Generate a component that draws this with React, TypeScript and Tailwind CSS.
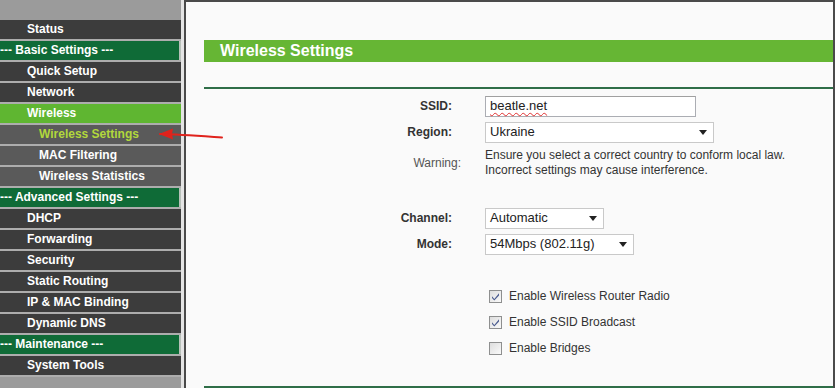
import React from "react";

type MenuItem = { label: string; kind: "top" | "head" | "active" | "sub" | "current" };

const menu: MenuItem[] = [
  { label: "Status", kind: "top" },
  { label: "--- Basic Settings ---", kind: "head" },
  { label: "Quick Setup", kind: "top" },
  { label: "Network", kind: "top" },
  { label: "Wireless", kind: "active" },
  { label: "Wireless Settings", kind: "current" },
  { label: "MAC Filtering", kind: "sub" },
  { label: "Wireless Statistics", kind: "sub" },
  { label: "--- Advanced Settings ---", kind: "head" },
  { label: "DHCP", kind: "top" },
  { label: "Forwarding", kind: "top" },
  { label: "Security", kind: "top" },
  { label: "Static Routing", kind: "top" },
  { label: "IP & MAC Binding", kind: "top" },
  { label: "Dynamic DNS", kind: "top" },
  { label: "--- Maintenance ---", kind: "head" },
  { label: "System Tools", kind: "top" },
];

function MenuRow({ item }: { item: MenuItem }) {
  if (item.kind === "head") {
    return (
      <div className="h-[19px] bg-[#0f6b37] border-r-2 border-[#b7c0b9] text-white text-[12px] font-bold leading-[19px] whitespace-nowrap">
        {item.label}
      </div>
    );
  }
  if (item.kind === "active") {
    return (
      <div className="h-[19px] bg-[#5fb631] text-white text-[12px] font-bold leading-[19px] pl-[27px]">
        {item.label}
      </div>
    );
  }
  if (item.kind === "current") {
    return (
      <div className="h-[19px] bg-[#5a5a5a] text-[#b2d83c] text-[12px] font-bold leading-[19px] pl-[39px]">
        {item.label}
      </div>
    );
  }
  if (item.kind === "sub") {
    return (
      <div className="h-[19px] bg-[#5a5a5a] text-white text-[12px] font-bold leading-[19px] pl-[39px]">
        {item.label}
      </div>
    );
  }
  return (
    <div className="h-[19px] bg-[#3c3c3c] text-white text-[12px] font-bold leading-[19px] pl-[27px]">
      {item.label}
    </div>
  );
}

function Caret() {
  return (
    <svg width="8" height="5" viewBox="0 0 8 5" className="shrink-0">
      <path d="M0 0 L8 0 L4 5 Z" fill="#222" />
    </svg>
  );
}

function Select({ value, width }: { value: string; width: string }) {
  return (
    <div
      className={`${width} h-[21px] flex items-center justify-between border border-[#c9c9c9] bg-white pl-[4px] pr-[6px] text-[13px] text-[#222]`}
    >
      <span>{value}</span>
      <Caret />
    </div>
  );
}

function Check({ on }: { on: boolean }) {
  return (
    <svg width="13" height="13" viewBox="0 0 13 13" className="shrink-0">
      <defs>
        <linearGradient id="cbg" x1="0" y1="0" x2="1" y2="1">
          <stop offset="0" stopColor="#dcdcdc" />
          <stop offset="1" stopColor="#fbfbfb" />
        </linearGradient>
      </defs>
      <rect x="0.5" y="0.5" width="12" height="12" fill="url(#cbg)" stroke="#8e8f8f" />
      {on && <path d="M3 6.2 L5.3 9 L10 3.3 L10 5.4 L5.3 10.6 L3 8 Z" fill="#4a5b8f" />}
    </svg>
  );
}

function Label({ children }: { children: React.ReactNode }) {
  return <div className="text-right text-[12px] font-bold text-[#333] pr-[9px]">{children}</div>;
}

export default function App() {
  return (
    <div className="relative w-[835px] h-[388px] overflow-hidden flex bg-white font-['Liberation_Sans',Arial,sans-serif]">
      <div className="w-[181px] shrink-0 bg-[#9b9b9b] flex flex-col">
        <div className="h-[20px]" />
        {menu.map((m) => (
          <div key={m.label} className="border-b-2 border-[#adadad]">
            <MenuRow item={m} />
          </div>
        ))}
      </div>
      <div className="w-[3px] shrink-0 bg-[#e4e4e4]" />
      <div className="flex-1 bg-[#fafafa] border-l-2 border-t-2 border-r-2 border-[#4a4a4a] pl-[18px]">
        <div className="mt-[38px] h-[22px] bg-[#66b634] text-white text-[16px] font-bold leading-[22px] pl-[16px]">
          Wireless Settings
        </div>
        <div className="mt-[25px] h-[2px] bg-[#2f6e48]" />
        <div className="mt-[4px] grid grid-cols-[257px_1fr] gap-x-[24px]">
          <div className="h-[26px] flex items-center justify-end">
            <Label>SSID:</Label>
          </div>
          <div className="h-[26px] flex items-center">
            <div className="w-[211px] h-[21px] border border-[#abadb3] border-t-[#a0a0a0] bg-white pl-[4px] flex items-center text-[13px] text-[#222]">
              <span className="underline decoration-wavy decoration-[#e03030] decoration-1 underline-offset-2">
                beatle.net
              </span>
            </div>
          </div>
          <div className="h-[26px] flex items-center justify-end">
            <Label>Region:</Label>
          </div>
          <div className="h-[26px] flex items-center">
            <Select value="Ukraine" width="w-[229px]" />
          </div>
          <div className="py-[3px] flex items-center justify-end text-[12px] text-[#555]">Warning:</div>
          <div className="py-[3px] text-[12px] leading-[15px] text-[#333]">
            <div>Ensure you select a correct country to conform local law.</div>
            <div>Incorrect settings may cause interference.</div>
          </div>
          <div className="col-span-2 h-[24px]" />
          <div className="h-[26px] flex items-center justify-end">
            <Label>Channel:</Label>
          </div>
          <div className="h-[26px] flex items-center">
            <Select value="Automatic" width="w-[119px]" />
          </div>
          <div className="h-[26px] flex items-center justify-end">
            <Label>Mode:</Label>
          </div>
          <div className="h-[26px] flex items-center">
            <Select value="54Mbps (802.11g)" width="w-[149px]" />
          </div>
          <div className="col-span-2 h-[26px]" />
          <div />
          <div className="flex flex-col text-[12px] text-[#333]">
            {[
              { t: "Enable Wireless Router Radio", on: true },
              { t: "Enable SSID Broadcast", on: true },
              { t: "Enable Bridges", on: false },
            ].map((c) => (
              <div key={c.t} className="h-[26px] flex items-center gap-[7px] pl-[4px]">
                <Check on={c.on} />
                <span>{c.t}</span>
              </div>
            ))}
          </div>
        </div>
        <div className="mt-[25px] h-[2px] bg-[#2f6e48]" />
      </div>
      <svg className="absolute left-[150px] top-[122px]" width="80" height="24" viewBox="150 122 80 24">
        <path d="M159 134 L173 128.5 L172 134 L173 139.5 Z" fill="#e0231c" />
        <path d="M160 134 C 180 134.5, 200 136, 222 137.5" stroke="#e0231c" strokeWidth="2" fill="none" strokeLinecap="round" />
      </svg>
    </div>
  );
}
